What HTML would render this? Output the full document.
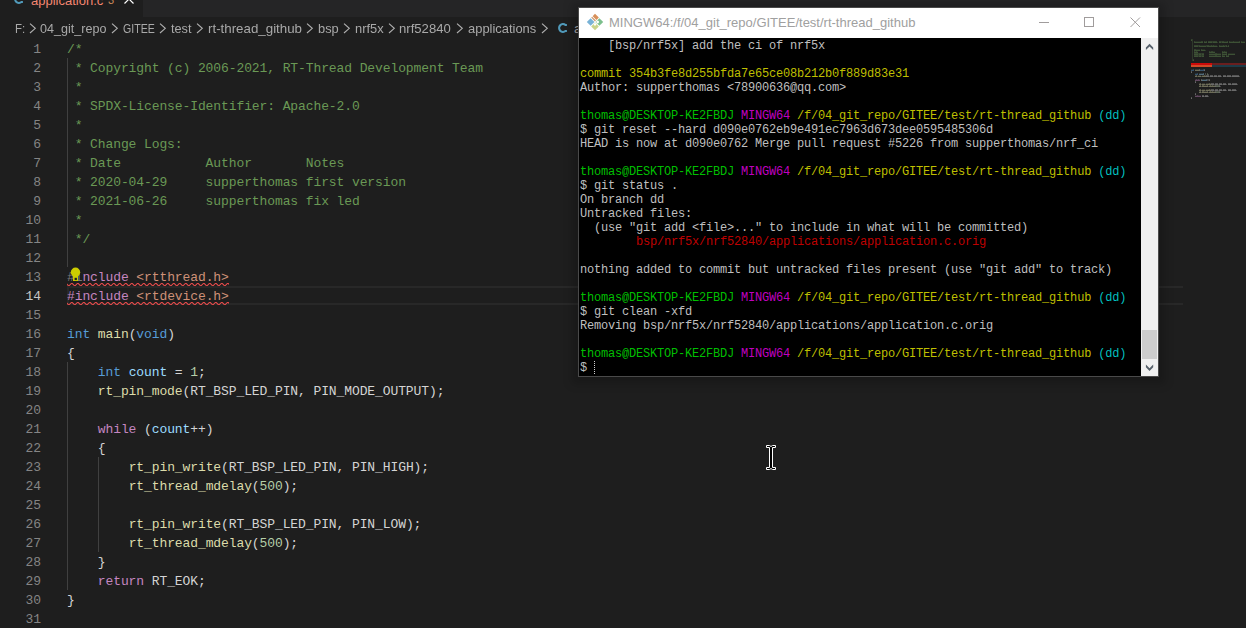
<!DOCTYPE html>
<html><head><meta charset="utf-8"><style>
*{margin:0;padding:0;box-sizing:border-box}
html,body{width:1246px;height:628px;overflow:hidden;background:#1e1e1e}
body{position:relative;font-family:"Liberation Sans",sans-serif}
.a{position:absolute}
.ln{position:absolute;left:0;width:41px;text-align:right;height:19px;line-height:19px;font-family:"Liberation Mono",monospace;font-size:13px;letter-spacing:-0.1px;color:#858585;white-space:pre}
.cl{position:absolute;left:67px;height:19px;line-height:19px;font-family:"Liberation Mono",monospace;font-size:13px;letter-spacing:-0.1px;white-space:pre}
.bc{position:absolute;top:18px;height:22px;line-height:22px;font-size:13px;color:#a9a9a9;white-space:pre}
.chev{position:absolute;top:22.6px;width:8px;height:11px}
.tl{position:absolute;left:580px;height:14px;line-height:14px;font-family:"Liberation Mono",monospace;font-size:12px;letter-spacing:-0.2px;white-space:pre}
</style></head><body>

<div class="a" style="left:0;top:0;width:1246px;height:17px;background:#252526"></div>
<div class="a" style="left:0;top:0;width:143px;height:17px;background:#1e1e1e"></div>
<svg class="a" style="left:11.3px;top:-9px" width="16" height="16"><path d="M11.9 5.0 L10.5 5.0 A3.9 3.9 0 1 0 10.5 11.0 L11.9 11.0" fill="none" stroke="#519aba" stroke-width="2.1"/></svg>
<div class="a" style="left:31px;top:-9.5px;height:20px;line-height:20px;font-size:13px;color:#f48771;white-space:pre">application.c</div>
<div class="a" style="left:108px;top:-10.5px;height:20px;line-height:20px;font-size:11px;color:#cc8b5a">3</div>
<svg class="a" style="left:124px;top:-6px" width="10" height="11"><path d="M0.5 0.5 L9.5 9.5 M9.5 0.5 L0.5 9.5" stroke="#ffffff" stroke-width="1.2"/></svg>
<div class="bc" style="left:14.52px;transform:scaleX(0.8800);transform-origin:0 0">F:</div>
<div class="bc" style="left:40.10px;transform:scaleX(0.9681);transform-origin:0 0">04_git_repo</div>
<div class="bc" style="left:123.20px;transform:scaleX(0.8154);transform-origin:0 0">GITEE</div>
<div class="bc" style="left:171.40px;transform:scaleX(0.9762);transform-origin:0 0">test</div>
<div class="bc" style="left:207.78px;transform:scaleX(1.0242);transform-origin:0 0">rt-thread_github</div>
<div class="bc" style="left:318.31px;transform:scaleX(0.9900);transform-origin:0 0">bsp</div>
<div class="bc" style="left:355.01px;transform:scaleX(0.9893);transform-origin:0 0">nrf5x</div>
<div class="bc" style="left:399.49px;transform:scaleX(1.0100);transform-origin:0 0">nrf52840</div>
<div class="bc" style="left:467.70px;transform:scaleX(0.9942);transform-origin:0 0">applications</div>
<svg class="chev" style="left:28.7px" width="8" height="11"><path d="M1 0.6 L6.3 5.3 L1 10" fill="none" stroke="#b0b0b0" stroke-width="1.1"/></svg>
<svg class="chev" style="left:110.8px" width="8" height="11"><path d="M1 0.6 L6.3 5.3 L1 10" fill="none" stroke="#b0b0b0" stroke-width="1.1"/></svg>
<svg class="chev" style="left:158.8px" width="8" height="11"><path d="M1 0.6 L6.3 5.3 L1 10" fill="none" stroke="#b0b0b0" stroke-width="1.1"/></svg>
<svg class="chev" style="left:196.1px" width="8" height="11"><path d="M1 0.6 L6.3 5.3 L1 10" fill="none" stroke="#b0b0b0" stroke-width="1.1"/></svg>
<svg class="chev" style="left:306.3px" width="8" height="11"><path d="M1 0.6 L6.3 5.3 L1 10" fill="none" stroke="#b0b0b0" stroke-width="1.1"/></svg>
<svg class="chev" style="left:343.3px" width="8" height="11"><path d="M1 0.6 L6.3 5.3 L1 10" fill="none" stroke="#b0b0b0" stroke-width="1.1"/></svg>
<svg class="chev" style="left:387.8px" width="8" height="11"><path d="M1 0.6 L6.3 5.3 L1 10" fill="none" stroke="#b0b0b0" stroke-width="1.1"/></svg>
<svg class="chev" style="left:455.7px" width="8" height="11"><path d="M1 0.6 L6.3 5.3 L1 10" fill="none" stroke="#b0b0b0" stroke-width="1.1"/></svg>
<svg class="chev" style="left:540.5px" width="8" height="11"><path d="M1 0.6 L6.3 5.3 L1 10" fill="none" stroke="#b0b0b0" stroke-width="1.1"/></svg>
<svg class="a" style="left:555px;top:20px" width="16" height="16"><path d="M11.9 5.0 L10.5 5.0 A3.9 3.9 0 1 0 10.5 11.0 L11.9 11.0" fill="none" stroke="#519aba" stroke-width="2.1"/></svg>
<div class="bc" style="left:574px">a</div>
<div class="a" style="left:67px;top:286px;width:1116px;height:19px;border:2px solid #282828;border-right:none"></div>
<div class="a" style="left:67px;top:58px;width:1px;height:209px;background:#404040"></div>
<div class="a" style="left:67px;top:362px;width:1px;height:228px;background:#404040"></div>
<div class="a" style="left:98px;top:457px;width:1px;height:95px;background:#404040"></div>
<div class="ln" style="top:40px;color:#858585">1</div>
<div class="cl" style="top:40px"><span style="color:#6a9955">/*</span></div>
<div class="ln" style="top:59px;color:#858585">2</div>
<div class="cl" style="top:59px"><span style="color:#6a9955"> * Copyright (c) 2006-2021, RT-Thread Development Team</span></div>
<div class="ln" style="top:78px;color:#858585">3</div>
<div class="cl" style="top:78px"><span style="color:#6a9955"> *</span></div>
<div class="ln" style="top:97px;color:#858585">4</div>
<div class="cl" style="top:97px"><span style="color:#6a9955"> * SPDX-License-Identifier: Apache-2.0</span></div>
<div class="ln" style="top:116px;color:#858585">5</div>
<div class="cl" style="top:116px"><span style="color:#6a9955"> *</span></div>
<div class="ln" style="top:135px;color:#858585">6</div>
<div class="cl" style="top:135px"><span style="color:#6a9955"> * Change Logs:</span></div>
<div class="ln" style="top:154px;color:#858585">7</div>
<div class="cl" style="top:154px"><span style="color:#6a9955"> * Date           Author       Notes</span></div>
<div class="ln" style="top:173px;color:#858585">8</div>
<div class="cl" style="top:173px"><span style="color:#6a9955"> * 2020-04-29     supperthomas first version</span></div>
<div class="ln" style="top:192px;color:#858585">9</div>
<div class="cl" style="top:192px"><span style="color:#6a9955"> * 2021-06-26     supperthomas fix led</span></div>
<div class="ln" style="top:211px;color:#858585">10</div>
<div class="cl" style="top:211px"><span style="color:#6a9955"> *</span></div>
<div class="ln" style="top:230px;color:#858585">11</div>
<div class="cl" style="top:230px"><span style="color:#6a9955"> */</span></div>
<div class="ln" style="top:249px;color:#858585">12</div>
<div class="ln" style="top:268px;color:#858585">13</div>
<div class="cl" style="top:268px"><span style="color:#7a7a7a">#i</span><span style="color:#c586c0">nclude</span><span style="color:#d4d4d4"> </span><span style="color:#ce9178">&lt;rtthread.h&gt;</span></div>
<div class="ln" style="top:287px;color:#c6c6c6">14</div>
<div class="cl" style="top:287px"><span style="color:#c586c0">#include</span><span style="color:#d4d4d4"> </span><span style="color:#ce9178">&lt;rtdevice.h&gt;</span></div>
<div class="ln" style="top:306px;color:#858585">15</div>
<div class="ln" style="top:325px;color:#858585">16</div>
<div class="cl" style="top:325px"><span style="color:#569cd6">int</span><span style="color:#d4d4d4"> </span><span style="color:#dcdcaa">main</span><span style="color:#d4d4d4">(</span><span style="color:#569cd6">void</span><span style="color:#d4d4d4">)</span></div>
<div class="ln" style="top:344px;color:#858585">17</div>
<div class="cl" style="top:344px"><span style="color:#d4d4d4">{</span></div>
<div class="ln" style="top:363px;color:#858585">18</div>
<div class="cl" style="top:363px"><span style="color:#d4d4d4">    </span><span style="color:#569cd6">int</span><span style="color:#d4d4d4"> </span><span style="color:#9cdcfe">count</span><span style="color:#d4d4d4"> = </span><span style="color:#b5cea8">1</span><span style="color:#d4d4d4">;</span></div>
<div class="ln" style="top:382px;color:#858585">19</div>
<div class="cl" style="top:382px"><span style="color:#d4d4d4">    </span><span style="color:#dcdcaa">rt_pin_mode</span><span style="color:#d4d4d4">(RT_BSP_LED_PIN, PIN_MODE_OUTPUT);</span></div>
<div class="ln" style="top:401px;color:#858585">20</div>
<div class="ln" style="top:420px;color:#858585">21</div>
<div class="cl" style="top:420px"><span style="color:#d4d4d4">    </span><span style="color:#c586c0">while</span><span style="color:#d4d4d4"> (</span><span style="color:#9cdcfe">count</span><span style="color:#d4d4d4">++)</span></div>
<div class="ln" style="top:439px;color:#858585">22</div>
<div class="cl" style="top:439px"><span style="color:#d4d4d4">    {</span></div>
<div class="ln" style="top:458px;color:#858585">23</div>
<div class="cl" style="top:458px"><span style="color:#d4d4d4">        </span><span style="color:#dcdcaa">rt_pin_write</span><span style="color:#d4d4d4">(RT_BSP_LED_PIN, PIN_HIGH);</span></div>
<div class="ln" style="top:477px;color:#858585">24</div>
<div class="cl" style="top:477px"><span style="color:#d4d4d4">        </span><span style="color:#dcdcaa">rt_thread_mdelay</span><span style="color:#d4d4d4">(</span><span style="color:#b5cea8">500</span><span style="color:#d4d4d4">);</span></div>
<div class="ln" style="top:496px;color:#858585">25</div>
<div class="ln" style="top:515px;color:#858585">26</div>
<div class="cl" style="top:515px"><span style="color:#d4d4d4">        </span><span style="color:#dcdcaa">rt_pin_write</span><span style="color:#d4d4d4">(RT_BSP_LED_PIN, PIN_LOW);</span></div>
<div class="ln" style="top:534px;color:#858585">27</div>
<div class="cl" style="top:534px"><span style="color:#d4d4d4">        </span><span style="color:#dcdcaa">rt_thread_mdelay</span><span style="color:#d4d4d4">(</span><span style="color:#b5cea8">500</span><span style="color:#d4d4d4">);</span></div>
<div class="ln" style="top:553px;color:#858585">28</div>
<div class="cl" style="top:553px"><span style="color:#d4d4d4">    }</span></div>
<div class="ln" style="top:572px;color:#858585">29</div>
<div class="cl" style="top:572px"><span style="color:#d4d4d4">    </span><span style="color:#c586c0">return</span><span style="color:#d4d4d4"> RT_EOK;</span></div>
<div class="ln" style="top:591px;color:#858585">30</div>
<div class="cl" style="top:591px"><span style="color:#d4d4d4">}</span></div>
<div class="ln" style="top:610px;color:#858585">31</div>
<svg class="a" style="left:0;top:0" width="1246" height="628"><defs><pattern id="sq" patternUnits="userSpaceOnUse" x="67" y="283" width="6" height="19"><g fill="#f14c4c"><polygon points="5.5,0 2.5,3 1.1,3 4.1,0"/><polygon points="4,0 6,2 6,0.6 5.4,0"/><polygon points="0,2 1,3 2.4,3 0,0.6"/></g></pattern></defs><rect x="67" y="283" width="162" height="3" fill="url(#sq)"/><rect x="67" y="302" width="162" height="3" fill="url(#sq)"/></svg>
<svg class="a" style="left:0;top:0" width="1246" height="628"><circle cx="75.5" cy="272.2" r="4.7" fill="#cccc00"/><rect x="73" y="274" width="5" height="7" fill="#cccc00"/><rect x="74.6" y="277.8" width="2.3" height="2.3" fill="#1e1e1e"/></svg>
<div class="a" style="left:572px;top:3px;width:593px;height:381px;background:rgba(0,0,0,0.18);filter:blur(4px)"></div>
<div class="a" style="left:578px;top:7px;width:581px;height:370px;background:#4a4a4a"></div>
<div class="a" style="left:579px;top:8px;width:579px;height:30px;background:#ffffff"></div>
<div class="a" style="left:579px;top:38px;width:562px;height:338px;background:#000000"></div>
<div class="a" style="left:1141px;top:38px;width:17px;height:338px;background:#f0f0f0"></div>
<div class="a" style="left:1142px;top:330px;width:15px;height:29px;background:#cdcdcd"></div>
<svg class="a" style="left:0;top:0" width="1246" height="628"><polygon points="1145.9,50 1145.9,47.4 1149.55,43.7 1153.2,47.4 1153.2,50 1149.55,46.4" fill="#56606a"/><polygon points="1145.9,364.6 1145.9,367.2 1149.55,370.9 1153.2,367.2 1153.2,364.6 1149.55,368.2" fill="#56606a"/></svg>
<svg class="a" style="left:586px;top:13px" width="18" height="18" viewBox="0 0 18 18"><g transform="rotate(45 9 9)"><rect x="3.2" y="3.2" width="5.4" height="3.3" fill="#d8905a"/><rect x="3.2" y="7.3" width="5.4" height="1.3" fill="#cc9a70"/><rect x="9.4" y="3.2" width="5.4" height="5.4" fill="#7cbf8c"/><rect x="9.4" y="9.4" width="5.4" height="5.4" fill="#c9d48a"/><rect x="3.2" y="9.4" width="5.4" height="5.4" fill="#78b2d6"/><circle cx="10.9" cy="7.1" r="1.3" fill="#fff"/><circle cx="10.7" cy="10.7" r="1.3" fill="#fff"/></g></svg>
<div class="a" style="left:609px;top:14.3px;height:18px;line-height:18px;font-size:13px;color:#a0a0a0;white-space:pre">MINGW64:/f/04_git_repo/GITEE/test/rt-thread_github</div>
<div class="a" style="left:1039px;top:22px;width:10px;height:1px;background:#a09c9c"></div>
<div class="a" style="left:1084px;top:17px;width:10px;height:10px;border:1px solid #a09c9c"></div>
<svg class="a" style="left:1130px;top:17px" width="11" height="11"><path d="M0.5 0.5 L10 10 M10 0.5 L0.5 10" fill="none" stroke="#a09c9c" stroke-width="1"/></svg>
<div class="tl" style="top:39px"><span style="color:#bfbfbf">    [bsp/nrf5x] add the ci of nrf5x</span></div>
<div class="tl" style="top:67px"><span style="color:#bfbf00">commit 354b3fe8d255bfda7e65ce08b212b0f889d83e31</span></div>
<div class="tl" style="top:81px"><span style="color:#bfbfbf">Author: supperthomas &lt;78900636@qq.com&gt;</span></div>
<div class="tl" style="top:109px"><span style="color:#00bf00">thomas@DESKTOP-KE2FBDJ</span><span style="color:#bfbfbf"> </span><span style="color:#bf00bf">MINGW64</span><span style="color:#bfbfbf"> </span><span style="color:#bfbf00">/f/04_git_repo/GITEE/test/rt-thread_github</span><span style="color:#bfbfbf"> </span><span style="color:#00bfbf">(dd)</span></div>
<div class="tl" style="top:123px"><span style="color:#bfbfbf">$ git reset --hard d090e0762eb9e491ec7963d673dee0595485306d</span></div>
<div class="tl" style="top:137px"><span style="color:#bfbfbf">HEAD is now at d090e0762 Merge pull request #5226 from supperthomas/nrf_ci</span></div>
<div class="tl" style="top:165px"><span style="color:#00bf00">thomas@DESKTOP-KE2FBDJ</span><span style="color:#bfbfbf"> </span><span style="color:#bf00bf">MINGW64</span><span style="color:#bfbfbf"> </span><span style="color:#bfbf00">/f/04_git_repo/GITEE/test/rt-thread_github</span><span style="color:#bfbfbf"> </span><span style="color:#00bfbf">(dd)</span></div>
<div class="tl" style="top:179px"><span style="color:#bfbfbf">$ git status .</span></div>
<div class="tl" style="top:193px"><span style="color:#bfbfbf">On branch dd</span></div>
<div class="tl" style="top:207px"><span style="color:#bfbfbf">Untracked files:</span></div>
<div class="tl" style="top:221px"><span style="color:#bfbfbf">  (use &quot;git add &lt;file&gt;...&quot; to include in what will be committed)</span></div>
<div class="tl" style="top:235px"><span style="color:#bf0000">        bsp/nrf5x/nrf52840/applications/application.c.orig</span></div>
<div class="tl" style="top:263px"><span style="color:#bfbfbf">nothing added to commit but untracked files present (use &quot;git add&quot; to track)</span></div>
<div class="tl" style="top:291px"><span style="color:#00bf00">thomas@DESKTOP-KE2FBDJ</span><span style="color:#bfbfbf"> </span><span style="color:#bf00bf">MINGW64</span><span style="color:#bfbfbf"> </span><span style="color:#bfbf00">/f/04_git_repo/GITEE/test/rt-thread_github</span><span style="color:#bfbfbf"> </span><span style="color:#00bfbf">(dd)</span></div>
<div class="tl" style="top:305px"><span style="color:#bfbfbf">$ git clean -xfd</span></div>
<div class="tl" style="top:319px"><span style="color:#bfbfbf">Removing bsp/nrf5x/nrf52840/applications/application.c.orig</span></div>
<div class="tl" style="top:347px"><span style="color:#00bf00">thomas@DESKTOP-KE2FBDJ</span><span style="color:#bfbfbf"> </span><span style="color:#bf00bf">MINGW64</span><span style="color:#bfbfbf"> </span><span style="color:#bfbf00">/f/04_git_repo/GITEE/test/rt-thread_github</span><span style="color:#bfbfbf"> </span><span style="color:#00bfbf">(dd)</span></div>
<div class="tl" style="top:361px"><span style="color:#bfbfbf">$ </span></div>
<div class="a" style="left:594px;top:361px;width:1px;height:13px;background:repeating-linear-gradient(#d0d0d0 0 1px,transparent 1px 2px)"></div>
<svg class="a" style="left:765px;top:444px" width="12" height="28"><path d="M1.5 1.5 H4.5 L6 2.5 L7.5 1.5 H10.5 V3.5 H7.5 V23.5 H10.5 V25.5 H7.5 L6 24.5 L4.5 25.5 H1.5 V23.5 H4.5 V3.5 H1.5 Z" fill="#000" stroke="#fff" stroke-width="1"/></svg>
<svg class="a" style="left:0;top:0" width="1246" height="628"><rect x="1191" y="63" width="21" height="2" fill="#cc0a0a"/><rect x="1212" y="63" width="34" height="2" fill="#6a1e1e"/><rect x="1191" y="65" width="21" height="2" fill="#d04a28"/><rect x="1212" y="65" width="34" height="2" fill="#1d3b48"/><rect x="1191" y="39" width="1" height="1" fill="#6a9955" fill-opacity="0.30"/><rect x="1191" y="40" width="1" height="1" fill="#6a9955" fill-opacity="0.42"/><rect x="1192" y="39" width="1" height="2" fill="#6a9955" fill-opacity="0.22"/><rect x="1192" y="41" width="1" height="2" fill="#6a9955" fill-opacity="0.22"/><rect x="1194" y="41" width="1" height="1" fill="#6a9955" fill-opacity="0.30"/><rect x="1194" y="42" width="1" height="1" fill="#6a9955" fill-opacity="0.42"/><rect x="1195" y="41" width="1" height="1" fill="#6a9955" fill-opacity="0.14"/><rect x="1195" y="42" width="1" height="1" fill="#6a9955" fill-opacity="0.42"/><rect x="1196" y="41" width="1" height="1" fill="#6a9955" fill-opacity="0.14"/><rect x="1196" y="42" width="1" height="1" fill="#6a9955" fill-opacity="0.42"/><rect x="1197" y="41" width="1" height="1" fill="#6a9955" fill-opacity="0.14"/><rect x="1197" y="42" width="1" height="1" fill="#6a9955" fill-opacity="0.42"/><rect x="1198" y="41" width="1" height="1" fill="#6a9955" fill-opacity="0.14"/><rect x="1198" y="42" width="1" height="1" fill="#6a9955" fill-opacity="0.42"/><rect x="1199" y="41" width="1" height="1" fill="#6a9955" fill-opacity="0.14"/><rect x="1199" y="42" width="1" height="1" fill="#6a9955" fill-opacity="0.42"/><rect x="1200" y="41" width="1" height="1" fill="#6a9955" fill-opacity="0.14"/><rect x="1200" y="42" width="1" height="1" fill="#6a9955" fill-opacity="0.42"/><rect x="1201" y="41" width="1" height="1" fill="#6a9955" fill-opacity="0.30"/><rect x="1201" y="42" width="1" height="1" fill="#6a9955" fill-opacity="0.42"/><rect x="1202" y="41" width="1" height="1" fill="#6a9955" fill-opacity="0.30"/><rect x="1202" y="42" width="1" height="1" fill="#6a9955" fill-opacity="0.42"/><rect x="1204" y="41" width="1" height="1" fill="#6a9955" fill-opacity="0.30"/><rect x="1204" y="42" width="1" height="1" fill="#6a9955" fill-opacity="0.42"/><rect x="1205" y="41" width="1" height="1" fill="#6a9955" fill-opacity="0.14"/><rect x="1205" y="42" width="1" height="1" fill="#6a9955" fill-opacity="0.42"/><rect x="1206" y="41" width="1" height="1" fill="#6a9955" fill-opacity="0.30"/><rect x="1206" y="42" width="1" height="1" fill="#6a9955" fill-opacity="0.42"/><rect x="1208" y="41" width="1" height="1" fill="#6a9955" fill-opacity="0.30"/><rect x="1208" y="42" width="1" height="1" fill="#6a9955" fill-opacity="0.42"/><rect x="1209" y="41" width="1" height="1" fill="#6a9955" fill-opacity="0.30"/><rect x="1209" y="42" width="1" height="1" fill="#6a9955" fill-opacity="0.42"/><rect x="1210" y="41" width="1" height="1" fill="#6a9955" fill-opacity="0.30"/><rect x="1210" y="42" width="1" height="1" fill="#6a9955" fill-opacity="0.42"/><rect x="1211" y="41" width="1" height="1" fill="#6a9955" fill-opacity="0.30"/><rect x="1211" y="42" width="1" height="1" fill="#6a9955" fill-opacity="0.42"/><rect x="1212" y="41" width="1" height="2" fill="#6a9955" fill-opacity="0.22"/><rect x="1213" y="41" width="1" height="1" fill="#6a9955" fill-opacity="0.30"/><rect x="1213" y="42" width="1" height="1" fill="#6a9955" fill-opacity="0.42"/><rect x="1214" y="41" width="1" height="1" fill="#6a9955" fill-opacity="0.30"/><rect x="1214" y="42" width="1" height="1" fill="#6a9955" fill-opacity="0.42"/><rect x="1215" y="41" width="1" height="1" fill="#6a9955" fill-opacity="0.30"/><rect x="1215" y="42" width="1" height="1" fill="#6a9955" fill-opacity="0.42"/><rect x="1216" y="41" width="1" height="1" fill="#6a9955" fill-opacity="0.30"/><rect x="1216" y="42" width="1" height="1" fill="#6a9955" fill-opacity="0.42"/><rect x="1217" y="42" width="1" height="1" fill="#6a9955" fill-opacity="0.22"/><rect x="1219" y="41" width="1" height="1" fill="#6a9955" fill-opacity="0.30"/><rect x="1219" y="42" width="1" height="1" fill="#6a9955" fill-opacity="0.42"/><rect x="1220" y="41" width="1" height="1" fill="#6a9955" fill-opacity="0.30"/><rect x="1220" y="42" width="1" height="1" fill="#6a9955" fill-opacity="0.42"/><rect x="1221" y="41" width="1" height="2" fill="#6a9955" fill-opacity="0.22"/><rect x="1222" y="41" width="1" height="1" fill="#6a9955" fill-opacity="0.30"/><rect x="1222" y="42" width="1" height="1" fill="#6a9955" fill-opacity="0.42"/><rect x="1223" y="41" width="1" height="1" fill="#6a9955" fill-opacity="0.30"/><rect x="1223" y="42" width="1" height="1" fill="#6a9955" fill-opacity="0.42"/><rect x="1224" y="41" width="1" height="1" fill="#6a9955" fill-opacity="0.14"/><rect x="1224" y="42" width="1" height="1" fill="#6a9955" fill-opacity="0.42"/><rect x="1225" y="41" width="1" height="1" fill="#6a9955" fill-opacity="0.14"/><rect x="1225" y="42" width="1" height="1" fill="#6a9955" fill-opacity="0.42"/><rect x="1226" y="41" width="1" height="1" fill="#6a9955" fill-opacity="0.14"/><rect x="1226" y="42" width="1" height="1" fill="#6a9955" fill-opacity="0.42"/><rect x="1227" y="41" width="1" height="1" fill="#6a9955" fill-opacity="0.30"/><rect x="1227" y="42" width="1" height="1" fill="#6a9955" fill-opacity="0.42"/><rect x="1229" y="41" width="1" height="1" fill="#6a9955" fill-opacity="0.30"/><rect x="1229" y="42" width="1" height="1" fill="#6a9955" fill-opacity="0.42"/><rect x="1230" y="41" width="1" height="1" fill="#6a9955" fill-opacity="0.14"/><rect x="1230" y="42" width="1" height="1" fill="#6a9955" fill-opacity="0.42"/><rect x="1231" y="41" width="1" height="1" fill="#6a9955" fill-opacity="0.14"/><rect x="1231" y="42" width="1" height="1" fill="#6a9955" fill-opacity="0.42"/><rect x="1232" y="41" width="1" height="1" fill="#6a9955" fill-opacity="0.14"/><rect x="1232" y="42" width="1" height="1" fill="#6a9955" fill-opacity="0.42"/><rect x="1233" y="41" width="1" height="1" fill="#6a9955" fill-opacity="0.30"/><rect x="1233" y="42" width="1" height="1" fill="#6a9955" fill-opacity="0.42"/><rect x="1234" y="41" width="1" height="1" fill="#6a9955" fill-opacity="0.14"/><rect x="1234" y="42" width="1" height="1" fill="#6a9955" fill-opacity="0.42"/><rect x="1235" y="41" width="1" height="1" fill="#6a9955" fill-opacity="0.14"/><rect x="1235" y="42" width="1" height="1" fill="#6a9955" fill-opacity="0.42"/><rect x="1236" y="41" width="1" height="1" fill="#6a9955" fill-opacity="0.14"/><rect x="1236" y="42" width="1" height="1" fill="#6a9955" fill-opacity="0.42"/><rect x="1237" y="41" width="1" height="1" fill="#6a9955" fill-opacity="0.14"/><rect x="1237" y="42" width="1" height="1" fill="#6a9955" fill-opacity="0.42"/><rect x="1238" y="41" width="1" height="1" fill="#6a9955" fill-opacity="0.14"/><rect x="1238" y="42" width="1" height="1" fill="#6a9955" fill-opacity="0.42"/><rect x="1239" y="41" width="1" height="1" fill="#6a9955" fill-opacity="0.30"/><rect x="1239" y="42" width="1" height="1" fill="#6a9955" fill-opacity="0.42"/><rect x="1241" y="41" width="1" height="1" fill="#6a9955" fill-opacity="0.30"/><rect x="1241" y="42" width="1" height="1" fill="#6a9955" fill-opacity="0.42"/><rect x="1242" y="41" width="1" height="1" fill="#6a9955" fill-opacity="0.14"/><rect x="1242" y="42" width="1" height="1" fill="#6a9955" fill-opacity="0.42"/><rect x="1243" y="41" width="1" height="1" fill="#6a9955" fill-opacity="0.14"/><rect x="1243" y="42" width="1" height="1" fill="#6a9955" fill-opacity="0.42"/><rect x="1244" y="41" width="1" height="1" fill="#6a9955" fill-opacity="0.14"/><rect x="1244" y="42" width="1" height="1" fill="#6a9955" fill-opacity="0.42"/><rect x="1192" y="43" width="1" height="2" fill="#6a9955" fill-opacity="0.22"/><rect x="1192" y="45" width="1" height="2" fill="#6a9955" fill-opacity="0.22"/><rect x="1194" y="45" width="1" height="1" fill="#6a9955" fill-opacity="0.30"/><rect x="1194" y="46" width="1" height="1" fill="#6a9955" fill-opacity="0.42"/><rect x="1195" y="45" width="1" height="1" fill="#6a9955" fill-opacity="0.30"/><rect x="1195" y="46" width="1" height="1" fill="#6a9955" fill-opacity="0.42"/><rect x="1196" y="45" width="1" height="1" fill="#6a9955" fill-opacity="0.30"/><rect x="1196" y="46" width="1" height="1" fill="#6a9955" fill-opacity="0.42"/><rect x="1197" y="45" width="1" height="1" fill="#6a9955" fill-opacity="0.30"/><rect x="1197" y="46" width="1" height="1" fill="#6a9955" fill-opacity="0.42"/><rect x="1198" y="45" width="1" height="2" fill="#6a9955" fill-opacity="0.22"/><rect x="1199" y="45" width="1" height="1" fill="#6a9955" fill-opacity="0.30"/><rect x="1199" y="46" width="1" height="1" fill="#6a9955" fill-opacity="0.42"/><rect x="1200" y="45" width="1" height="1" fill="#6a9955" fill-opacity="0.14"/><rect x="1200" y="46" width="1" height="1" fill="#6a9955" fill-opacity="0.42"/><rect x="1201" y="45" width="1" height="1" fill="#6a9955" fill-opacity="0.14"/><rect x="1201" y="46" width="1" height="1" fill="#6a9955" fill-opacity="0.42"/><rect x="1202" y="45" width="1" height="1" fill="#6a9955" fill-opacity="0.14"/><rect x="1202" y="46" width="1" height="1" fill="#6a9955" fill-opacity="0.42"/><rect x="1203" y="45" width="1" height="1" fill="#6a9955" fill-opacity="0.14"/><rect x="1203" y="46" width="1" height="1" fill="#6a9955" fill-opacity="0.42"/><rect x="1204" y="45" width="1" height="1" fill="#6a9955" fill-opacity="0.14"/><rect x="1204" y="46" width="1" height="1" fill="#6a9955" fill-opacity="0.42"/><rect x="1205" y="45" width="1" height="1" fill="#6a9955" fill-opacity="0.14"/><rect x="1205" y="46" width="1" height="1" fill="#6a9955" fill-opacity="0.42"/><rect x="1206" y="45" width="1" height="2" fill="#6a9955" fill-opacity="0.22"/><rect x="1207" y="45" width="1" height="1" fill="#6a9955" fill-opacity="0.30"/><rect x="1207" y="46" width="1" height="1" fill="#6a9955" fill-opacity="0.42"/><rect x="1208" y="45" width="1" height="1" fill="#6a9955" fill-opacity="0.30"/><rect x="1208" y="46" width="1" height="1" fill="#6a9955" fill-opacity="0.42"/><rect x="1209" y="45" width="1" height="1" fill="#6a9955" fill-opacity="0.14"/><rect x="1209" y="46" width="1" height="1" fill="#6a9955" fill-opacity="0.42"/><rect x="1210" y="45" width="1" height="1" fill="#6a9955" fill-opacity="0.14"/><rect x="1210" y="46" width="1" height="1" fill="#6a9955" fill-opacity="0.42"/><rect x="1211" y="45" width="1" height="1" fill="#6a9955" fill-opacity="0.30"/><rect x="1211" y="46" width="1" height="1" fill="#6a9955" fill-opacity="0.42"/><rect x="1212" y="45" width="1" height="1" fill="#6a9955" fill-opacity="0.14"/><rect x="1212" y="46" width="1" height="1" fill="#6a9955" fill-opacity="0.42"/><rect x="1213" y="45" width="1" height="1" fill="#6a9955" fill-opacity="0.30"/><rect x="1213" y="46" width="1" height="1" fill="#6a9955" fill-opacity="0.42"/><rect x="1214" y="45" width="1" height="1" fill="#6a9955" fill-opacity="0.14"/><rect x="1214" y="46" width="1" height="1" fill="#6a9955" fill-opacity="0.42"/><rect x="1215" y="45" width="1" height="1" fill="#6a9955" fill-opacity="0.14"/><rect x="1215" y="46" width="1" height="1" fill="#6a9955" fill-opacity="0.42"/><rect x="1216" y="45" width="1" height="1" fill="#6a9955" fill-opacity="0.14"/><rect x="1216" y="46" width="1" height="1" fill="#6a9955" fill-opacity="0.42"/><rect x="1217" y="46" width="1" height="1" fill="#6a9955" fill-opacity="0.22"/><rect x="1219" y="45" width="1" height="1" fill="#6a9955" fill-opacity="0.30"/><rect x="1219" y="46" width="1" height="1" fill="#6a9955" fill-opacity="0.42"/><rect x="1220" y="45" width="1" height="1" fill="#6a9955" fill-opacity="0.14"/><rect x="1220" y="46" width="1" height="1" fill="#6a9955" fill-opacity="0.42"/><rect x="1221" y="45" width="1" height="1" fill="#6a9955" fill-opacity="0.14"/><rect x="1221" y="46" width="1" height="1" fill="#6a9955" fill-opacity="0.42"/><rect x="1222" y="45" width="1" height="1" fill="#6a9955" fill-opacity="0.14"/><rect x="1222" y="46" width="1" height="1" fill="#6a9955" fill-opacity="0.42"/><rect x="1223" y="45" width="1" height="1" fill="#6a9955" fill-opacity="0.30"/><rect x="1223" y="46" width="1" height="1" fill="#6a9955" fill-opacity="0.42"/><rect x="1224" y="45" width="1" height="1" fill="#6a9955" fill-opacity="0.14"/><rect x="1224" y="46" width="1" height="1" fill="#6a9955" fill-opacity="0.42"/><rect x="1225" y="45" width="1" height="2" fill="#6a9955" fill-opacity="0.22"/><rect x="1226" y="45" width="1" height="1" fill="#6a9955" fill-opacity="0.30"/><rect x="1226" y="46" width="1" height="1" fill="#6a9955" fill-opacity="0.42"/><rect x="1227" y="46" width="1" height="1" fill="#6a9955" fill-opacity="0.22"/><rect x="1228" y="45" width="1" height="1" fill="#6a9955" fill-opacity="0.30"/><rect x="1228" y="46" width="1" height="1" fill="#6a9955" fill-opacity="0.42"/><rect x="1192" y="47" width="1" height="2" fill="#6a9955" fill-opacity="0.22"/><rect x="1192" y="49" width="1" height="2" fill="#6a9955" fill-opacity="0.22"/><rect x="1194" y="49" width="1" height="1" fill="#6a9955" fill-opacity="0.30"/><rect x="1194" y="50" width="1" height="1" fill="#6a9955" fill-opacity="0.42"/><rect x="1195" y="49" width="1" height="1" fill="#6a9955" fill-opacity="0.30"/><rect x="1195" y="50" width="1" height="1" fill="#6a9955" fill-opacity="0.42"/><rect x="1196" y="49" width="1" height="1" fill="#6a9955" fill-opacity="0.14"/><rect x="1196" y="50" width="1" height="1" fill="#6a9955" fill-opacity="0.42"/><rect x="1197" y="49" width="1" height="1" fill="#6a9955" fill-opacity="0.14"/><rect x="1197" y="50" width="1" height="1" fill="#6a9955" fill-opacity="0.42"/><rect x="1198" y="49" width="1" height="1" fill="#6a9955" fill-opacity="0.14"/><rect x="1198" y="50" width="1" height="1" fill="#6a9955" fill-opacity="0.42"/><rect x="1199" y="49" width="1" height="1" fill="#6a9955" fill-opacity="0.14"/><rect x="1199" y="50" width="1" height="1" fill="#6a9955" fill-opacity="0.42"/><rect x="1201" y="49" width="1" height="1" fill="#6a9955" fill-opacity="0.30"/><rect x="1201" y="50" width="1" height="1" fill="#6a9955" fill-opacity="0.42"/><rect x="1202" y="49" width="1" height="1" fill="#6a9955" fill-opacity="0.14"/><rect x="1202" y="50" width="1" height="1" fill="#6a9955" fill-opacity="0.42"/><rect x="1203" y="49" width="1" height="1" fill="#6a9955" fill-opacity="0.14"/><rect x="1203" y="50" width="1" height="1" fill="#6a9955" fill-opacity="0.42"/><rect x="1204" y="49" width="1" height="1" fill="#6a9955" fill-opacity="0.14"/><rect x="1204" y="50" width="1" height="1" fill="#6a9955" fill-opacity="0.42"/><rect x="1205" y="50" width="1" height="1" fill="#6a9955" fill-opacity="0.22"/><rect x="1192" y="51" width="1" height="2" fill="#6a9955" fill-opacity="0.22"/><rect x="1194" y="51" width="1" height="1" fill="#6a9955" fill-opacity="0.30"/><rect x="1194" y="52" width="1" height="1" fill="#6a9955" fill-opacity="0.42"/><rect x="1195" y="51" width="1" height="1" fill="#6a9955" fill-opacity="0.14"/><rect x="1195" y="52" width="1" height="1" fill="#6a9955" fill-opacity="0.42"/><rect x="1196" y="51" width="1" height="1" fill="#6a9955" fill-opacity="0.30"/><rect x="1196" y="52" width="1" height="1" fill="#6a9955" fill-opacity="0.42"/><rect x="1197" y="51" width="1" height="1" fill="#6a9955" fill-opacity="0.14"/><rect x="1197" y="52" width="1" height="1" fill="#6a9955" fill-opacity="0.42"/><rect x="1209" y="51" width="1" height="1" fill="#6a9955" fill-opacity="0.30"/><rect x="1209" y="52" width="1" height="1" fill="#6a9955" fill-opacity="0.42"/><rect x="1210" y="51" width="1" height="1" fill="#6a9955" fill-opacity="0.14"/><rect x="1210" y="52" width="1" height="1" fill="#6a9955" fill-opacity="0.42"/><rect x="1211" y="51" width="1" height="1" fill="#6a9955" fill-opacity="0.30"/><rect x="1211" y="52" width="1" height="1" fill="#6a9955" fill-opacity="0.42"/><rect x="1212" y="51" width="1" height="1" fill="#6a9955" fill-opacity="0.30"/><rect x="1212" y="52" width="1" height="1" fill="#6a9955" fill-opacity="0.42"/><rect x="1213" y="51" width="1" height="1" fill="#6a9955" fill-opacity="0.14"/><rect x="1213" y="52" width="1" height="1" fill="#6a9955" fill-opacity="0.42"/><rect x="1214" y="51" width="1" height="1" fill="#6a9955" fill-opacity="0.14"/><rect x="1214" y="52" width="1" height="1" fill="#6a9955" fill-opacity="0.42"/><rect x="1222" y="51" width="1" height="1" fill="#6a9955" fill-opacity="0.30"/><rect x="1222" y="52" width="1" height="1" fill="#6a9955" fill-opacity="0.42"/><rect x="1223" y="51" width="1" height="1" fill="#6a9955" fill-opacity="0.14"/><rect x="1223" y="52" width="1" height="1" fill="#6a9955" fill-opacity="0.42"/><rect x="1224" y="51" width="1" height="1" fill="#6a9955" fill-opacity="0.30"/><rect x="1224" y="52" width="1" height="1" fill="#6a9955" fill-opacity="0.42"/><rect x="1225" y="51" width="1" height="1" fill="#6a9955" fill-opacity="0.14"/><rect x="1225" y="52" width="1" height="1" fill="#6a9955" fill-opacity="0.42"/><rect x="1226" y="51" width="1" height="1" fill="#6a9955" fill-opacity="0.14"/><rect x="1226" y="52" width="1" height="1" fill="#6a9955" fill-opacity="0.42"/><rect x="1192" y="53" width="1" height="2" fill="#6a9955" fill-opacity="0.22"/><rect x="1194" y="53" width="1" height="1" fill="#6a9955" fill-opacity="0.30"/><rect x="1194" y="54" width="1" height="1" fill="#6a9955" fill-opacity="0.42"/><rect x="1195" y="53" width="1" height="1" fill="#6a9955" fill-opacity="0.30"/><rect x="1195" y="54" width="1" height="1" fill="#6a9955" fill-opacity="0.42"/><rect x="1196" y="53" width="1" height="1" fill="#6a9955" fill-opacity="0.30"/><rect x="1196" y="54" width="1" height="1" fill="#6a9955" fill-opacity="0.42"/><rect x="1197" y="53" width="1" height="1" fill="#6a9955" fill-opacity="0.30"/><rect x="1197" y="54" width="1" height="1" fill="#6a9955" fill-opacity="0.42"/><rect x="1198" y="53" width="1" height="2" fill="#6a9955" fill-opacity="0.22"/><rect x="1199" y="53" width="1" height="1" fill="#6a9955" fill-opacity="0.30"/><rect x="1199" y="54" width="1" height="1" fill="#6a9955" fill-opacity="0.42"/><rect x="1200" y="53" width="1" height="1" fill="#6a9955" fill-opacity="0.30"/><rect x="1200" y="54" width="1" height="1" fill="#6a9955" fill-opacity="0.42"/><rect x="1201" y="53" width="1" height="2" fill="#6a9955" fill-opacity="0.22"/><rect x="1202" y="53" width="1" height="1" fill="#6a9955" fill-opacity="0.30"/><rect x="1202" y="54" width="1" height="1" fill="#6a9955" fill-opacity="0.42"/><rect x="1203" y="53" width="1" height="1" fill="#6a9955" fill-opacity="0.30"/><rect x="1203" y="54" width="1" height="1" fill="#6a9955" fill-opacity="0.42"/><rect x="1209" y="53" width="1" height="1" fill="#6a9955" fill-opacity="0.14"/><rect x="1209" y="54" width="1" height="1" fill="#6a9955" fill-opacity="0.42"/><rect x="1210" y="53" width="1" height="1" fill="#6a9955" fill-opacity="0.14"/><rect x="1210" y="54" width="1" height="1" fill="#6a9955" fill-opacity="0.42"/><rect x="1211" y="53" width="1" height="1" fill="#6a9955" fill-opacity="0.14"/><rect x="1211" y="54" width="1" height="1" fill="#6a9955" fill-opacity="0.42"/><rect x="1212" y="53" width="1" height="1" fill="#6a9955" fill-opacity="0.14"/><rect x="1212" y="54" width="1" height="1" fill="#6a9955" fill-opacity="0.42"/><rect x="1213" y="53" width="1" height="1" fill="#6a9955" fill-opacity="0.14"/><rect x="1213" y="54" width="1" height="1" fill="#6a9955" fill-opacity="0.42"/><rect x="1214" y="53" width="1" height="1" fill="#6a9955" fill-opacity="0.14"/><rect x="1214" y="54" width="1" height="1" fill="#6a9955" fill-opacity="0.42"/><rect x="1215" y="53" width="1" height="1" fill="#6a9955" fill-opacity="0.30"/><rect x="1215" y="54" width="1" height="1" fill="#6a9955" fill-opacity="0.42"/><rect x="1216" y="53" width="1" height="1" fill="#6a9955" fill-opacity="0.30"/><rect x="1216" y="54" width="1" height="1" fill="#6a9955" fill-opacity="0.42"/><rect x="1217" y="53" width="1" height="1" fill="#6a9955" fill-opacity="0.14"/><rect x="1217" y="54" width="1" height="1" fill="#6a9955" fill-opacity="0.42"/><rect x="1218" y="53" width="1" height="1" fill="#6a9955" fill-opacity="0.14"/><rect x="1218" y="54" width="1" height="1" fill="#6a9955" fill-opacity="0.42"/><rect x="1219" y="53" width="1" height="1" fill="#6a9955" fill-opacity="0.14"/><rect x="1219" y="54" width="1" height="1" fill="#6a9955" fill-opacity="0.42"/><rect x="1220" y="53" width="1" height="1" fill="#6a9955" fill-opacity="0.14"/><rect x="1220" y="54" width="1" height="1" fill="#6a9955" fill-opacity="0.42"/><rect x="1222" y="53" width="1" height="1" fill="#6a9955" fill-opacity="0.30"/><rect x="1222" y="54" width="1" height="1" fill="#6a9955" fill-opacity="0.42"/><rect x="1223" y="53" width="1" height="1" fill="#6a9955" fill-opacity="0.14"/><rect x="1223" y="54" width="1" height="1" fill="#6a9955" fill-opacity="0.42"/><rect x="1224" y="53" width="1" height="1" fill="#6a9955" fill-opacity="0.14"/><rect x="1224" y="54" width="1" height="1" fill="#6a9955" fill-opacity="0.42"/><rect x="1225" y="53" width="1" height="1" fill="#6a9955" fill-opacity="0.14"/><rect x="1225" y="54" width="1" height="1" fill="#6a9955" fill-opacity="0.42"/><rect x="1226" y="53" width="1" height="1" fill="#6a9955" fill-opacity="0.30"/><rect x="1226" y="54" width="1" height="1" fill="#6a9955" fill-opacity="0.42"/><rect x="1228" y="53" width="1" height="1" fill="#6a9955" fill-opacity="0.14"/><rect x="1228" y="54" width="1" height="1" fill="#6a9955" fill-opacity="0.42"/><rect x="1229" y="53" width="1" height="1" fill="#6a9955" fill-opacity="0.14"/><rect x="1229" y="54" width="1" height="1" fill="#6a9955" fill-opacity="0.42"/><rect x="1230" y="53" width="1" height="1" fill="#6a9955" fill-opacity="0.14"/><rect x="1230" y="54" width="1" height="1" fill="#6a9955" fill-opacity="0.42"/><rect x="1231" y="53" width="1" height="1" fill="#6a9955" fill-opacity="0.14"/><rect x="1231" y="54" width="1" height="1" fill="#6a9955" fill-opacity="0.42"/><rect x="1232" y="53" width="1" height="1" fill="#6a9955" fill-opacity="0.14"/><rect x="1232" y="54" width="1" height="1" fill="#6a9955" fill-opacity="0.42"/><rect x="1233" y="53" width="1" height="1" fill="#6a9955" fill-opacity="0.14"/><rect x="1233" y="54" width="1" height="1" fill="#6a9955" fill-opacity="0.42"/><rect x="1234" y="53" width="1" height="1" fill="#6a9955" fill-opacity="0.14"/><rect x="1234" y="54" width="1" height="1" fill="#6a9955" fill-opacity="0.42"/><rect x="1192" y="55" width="1" height="2" fill="#6a9955" fill-opacity="0.22"/><rect x="1194" y="55" width="1" height="1" fill="#6a9955" fill-opacity="0.30"/><rect x="1194" y="56" width="1" height="1" fill="#6a9955" fill-opacity="0.42"/><rect x="1195" y="55" width="1" height="1" fill="#6a9955" fill-opacity="0.30"/><rect x="1195" y="56" width="1" height="1" fill="#6a9955" fill-opacity="0.42"/><rect x="1196" y="55" width="1" height="1" fill="#6a9955" fill-opacity="0.30"/><rect x="1196" y="56" width="1" height="1" fill="#6a9955" fill-opacity="0.42"/><rect x="1197" y="55" width="1" height="1" fill="#6a9955" fill-opacity="0.30"/><rect x="1197" y="56" width="1" height="1" fill="#6a9955" fill-opacity="0.42"/><rect x="1198" y="55" width="1" height="2" fill="#6a9955" fill-opacity="0.22"/><rect x="1199" y="55" width="1" height="1" fill="#6a9955" fill-opacity="0.30"/><rect x="1199" y="56" width="1" height="1" fill="#6a9955" fill-opacity="0.42"/><rect x="1200" y="55" width="1" height="1" fill="#6a9955" fill-opacity="0.30"/><rect x="1200" y="56" width="1" height="1" fill="#6a9955" fill-opacity="0.42"/><rect x="1201" y="55" width="1" height="2" fill="#6a9955" fill-opacity="0.22"/><rect x="1202" y="55" width="1" height="1" fill="#6a9955" fill-opacity="0.30"/><rect x="1202" y="56" width="1" height="1" fill="#6a9955" fill-opacity="0.42"/><rect x="1203" y="55" width="1" height="1" fill="#6a9955" fill-opacity="0.30"/><rect x="1203" y="56" width="1" height="1" fill="#6a9955" fill-opacity="0.42"/><rect x="1209" y="55" width="1" height="1" fill="#6a9955" fill-opacity="0.14"/><rect x="1209" y="56" width="1" height="1" fill="#6a9955" fill-opacity="0.42"/><rect x="1210" y="55" width="1" height="1" fill="#6a9955" fill-opacity="0.14"/><rect x="1210" y="56" width="1" height="1" fill="#6a9955" fill-opacity="0.42"/><rect x="1211" y="55" width="1" height="1" fill="#6a9955" fill-opacity="0.14"/><rect x="1211" y="56" width="1" height="1" fill="#6a9955" fill-opacity="0.42"/><rect x="1212" y="55" width="1" height="1" fill="#6a9955" fill-opacity="0.14"/><rect x="1212" y="56" width="1" height="1" fill="#6a9955" fill-opacity="0.42"/><rect x="1213" y="55" width="1" height="1" fill="#6a9955" fill-opacity="0.14"/><rect x="1213" y="56" width="1" height="1" fill="#6a9955" fill-opacity="0.42"/><rect x="1214" y="55" width="1" height="1" fill="#6a9955" fill-opacity="0.14"/><rect x="1214" y="56" width="1" height="1" fill="#6a9955" fill-opacity="0.42"/><rect x="1215" y="55" width="1" height="1" fill="#6a9955" fill-opacity="0.30"/><rect x="1215" y="56" width="1" height="1" fill="#6a9955" fill-opacity="0.42"/><rect x="1216" y="55" width="1" height="1" fill="#6a9955" fill-opacity="0.30"/><rect x="1216" y="56" width="1" height="1" fill="#6a9955" fill-opacity="0.42"/><rect x="1217" y="55" width="1" height="1" fill="#6a9955" fill-opacity="0.14"/><rect x="1217" y="56" width="1" height="1" fill="#6a9955" fill-opacity="0.42"/><rect x="1218" y="55" width="1" height="1" fill="#6a9955" fill-opacity="0.14"/><rect x="1218" y="56" width="1" height="1" fill="#6a9955" fill-opacity="0.42"/><rect x="1219" y="55" width="1" height="1" fill="#6a9955" fill-opacity="0.14"/><rect x="1219" y="56" width="1" height="1" fill="#6a9955" fill-opacity="0.42"/><rect x="1220" y="55" width="1" height="1" fill="#6a9955" fill-opacity="0.14"/><rect x="1220" y="56" width="1" height="1" fill="#6a9955" fill-opacity="0.42"/><rect x="1222" y="55" width="1" height="1" fill="#6a9955" fill-opacity="0.30"/><rect x="1222" y="56" width="1" height="1" fill="#6a9955" fill-opacity="0.42"/><rect x="1223" y="55" width="1" height="1" fill="#6a9955" fill-opacity="0.14"/><rect x="1223" y="56" width="1" height="1" fill="#6a9955" fill-opacity="0.42"/><rect x="1224" y="55" width="1" height="1" fill="#6a9955" fill-opacity="0.14"/><rect x="1224" y="56" width="1" height="1" fill="#6a9955" fill-opacity="0.42"/><rect x="1226" y="55" width="1" height="1" fill="#6a9955" fill-opacity="0.30"/><rect x="1226" y="56" width="1" height="1" fill="#6a9955" fill-opacity="0.42"/><rect x="1227" y="55" width="1" height="1" fill="#6a9955" fill-opacity="0.14"/><rect x="1227" y="56" width="1" height="1" fill="#6a9955" fill-opacity="0.42"/><rect x="1228" y="55" width="1" height="1" fill="#6a9955" fill-opacity="0.30"/><rect x="1228" y="56" width="1" height="1" fill="#6a9955" fill-opacity="0.42"/><rect x="1192" y="57" width="1" height="2" fill="#6a9955" fill-opacity="0.22"/><rect x="1192" y="59" width="1" height="2" fill="#6a9955" fill-opacity="0.22"/><rect x="1193" y="59" width="1" height="1" fill="#6a9955" fill-opacity="0.30"/><rect x="1193" y="60" width="1" height="1" fill="#6a9955" fill-opacity="0.42"/><rect x="1191" y="69" width="1" height="1" fill="#569cd6" fill-opacity="0.14"/><rect x="1191" y="70" width="1" height="1" fill="#569cd6" fill-opacity="0.42"/><rect x="1192" y="69" width="1" height="1" fill="#569cd6" fill-opacity="0.14"/><rect x="1192" y="70" width="1" height="1" fill="#569cd6" fill-opacity="0.42"/><rect x="1193" y="69" width="1" height="1" fill="#569cd6" fill-opacity="0.30"/><rect x="1193" y="70" width="1" height="1" fill="#569cd6" fill-opacity="0.42"/><rect x="1195" y="69" width="1" height="1" fill="#dcdcaa" fill-opacity="0.14"/><rect x="1195" y="70" width="1" height="1" fill="#dcdcaa" fill-opacity="0.42"/><rect x="1196" y="69" width="1" height="1" fill="#dcdcaa" fill-opacity="0.14"/><rect x="1196" y="70" width="1" height="1" fill="#dcdcaa" fill-opacity="0.42"/><rect x="1197" y="69" width="1" height="1" fill="#dcdcaa" fill-opacity="0.14"/><rect x="1197" y="70" width="1" height="1" fill="#dcdcaa" fill-opacity="0.42"/><rect x="1198" y="69" width="1" height="1" fill="#dcdcaa" fill-opacity="0.14"/><rect x="1198" y="70" width="1" height="1" fill="#dcdcaa" fill-opacity="0.42"/><rect x="1199" y="69" width="1" height="1" fill="#d4d4d4" fill-opacity="0.30"/><rect x="1199" y="70" width="1" height="1" fill="#d4d4d4" fill-opacity="0.42"/><rect x="1200" y="69" width="1" height="1" fill="#569cd6" fill-opacity="0.14"/><rect x="1200" y="70" width="1" height="1" fill="#569cd6" fill-opacity="0.42"/><rect x="1201" y="69" width="1" height="1" fill="#569cd6" fill-opacity="0.14"/><rect x="1201" y="70" width="1" height="1" fill="#569cd6" fill-opacity="0.42"/><rect x="1202" y="69" width="1" height="1" fill="#569cd6" fill-opacity="0.14"/><rect x="1202" y="70" width="1" height="1" fill="#569cd6" fill-opacity="0.42"/><rect x="1203" y="69" width="1" height="1" fill="#569cd6" fill-opacity="0.30"/><rect x="1203" y="70" width="1" height="1" fill="#569cd6" fill-opacity="0.42"/><rect x="1204" y="69" width="1" height="1" fill="#d4d4d4" fill-opacity="0.30"/><rect x="1204" y="70" width="1" height="1" fill="#d4d4d4" fill-opacity="0.42"/><rect x="1191" y="71" width="1" height="1" fill="#d4d4d4" fill-opacity="0.30"/><rect x="1191" y="72" width="1" height="1" fill="#d4d4d4" fill-opacity="0.42"/><rect x="1195" y="73" width="1" height="1" fill="#569cd6" fill-opacity="0.14"/><rect x="1195" y="74" width="1" height="1" fill="#569cd6" fill-opacity="0.42"/><rect x="1196" y="73" width="1" height="1" fill="#569cd6" fill-opacity="0.14"/><rect x="1196" y="74" width="1" height="1" fill="#569cd6" fill-opacity="0.42"/><rect x="1197" y="73" width="1" height="1" fill="#569cd6" fill-opacity="0.30"/><rect x="1197" y="74" width="1" height="1" fill="#569cd6" fill-opacity="0.42"/><rect x="1199" y="73" width="1" height="1" fill="#9cdcfe" fill-opacity="0.14"/><rect x="1199" y="74" width="1" height="1" fill="#9cdcfe" fill-opacity="0.42"/><rect x="1200" y="73" width="1" height="1" fill="#9cdcfe" fill-opacity="0.14"/><rect x="1200" y="74" width="1" height="1" fill="#9cdcfe" fill-opacity="0.42"/><rect x="1201" y="73" width="1" height="1" fill="#9cdcfe" fill-opacity="0.14"/><rect x="1201" y="74" width="1" height="1" fill="#9cdcfe" fill-opacity="0.42"/><rect x="1202" y="73" width="1" height="1" fill="#9cdcfe" fill-opacity="0.14"/><rect x="1202" y="74" width="1" height="1" fill="#9cdcfe" fill-opacity="0.42"/><rect x="1203" y="73" width="1" height="1" fill="#9cdcfe" fill-opacity="0.30"/><rect x="1203" y="74" width="1" height="1" fill="#9cdcfe" fill-opacity="0.42"/><rect x="1205" y="73" width="1" height="2" fill="#d4d4d4" fill-opacity="0.22"/><rect x="1207" y="73" width="1" height="1" fill="#b5cea8" fill-opacity="0.30"/><rect x="1207" y="74" width="1" height="1" fill="#b5cea8" fill-opacity="0.42"/><rect x="1208" y="74" width="1" height="1" fill="#d4d4d4" fill-opacity="0.22"/><rect x="1195" y="75" width="1" height="1" fill="#dcdcaa" fill-opacity="0.14"/><rect x="1195" y="76" width="1" height="1" fill="#dcdcaa" fill-opacity="0.42"/><rect x="1196" y="75" width="1" height="1" fill="#dcdcaa" fill-opacity="0.30"/><rect x="1196" y="76" width="1" height="1" fill="#dcdcaa" fill-opacity="0.42"/><rect x="1197" y="76" width="1" height="1" fill="#dcdcaa" fill-opacity="0.22"/><rect x="1198" y="75" width="1" height="1" fill="#dcdcaa" fill-opacity="0.14"/><rect x="1198" y="76" width="1" height="1" fill="#dcdcaa" fill-opacity="0.42"/><rect x="1199" y="75" width="1" height="1" fill="#dcdcaa" fill-opacity="0.14"/><rect x="1199" y="76" width="1" height="1" fill="#dcdcaa" fill-opacity="0.42"/><rect x="1200" y="75" width="1" height="1" fill="#dcdcaa" fill-opacity="0.14"/><rect x="1200" y="76" width="1" height="1" fill="#dcdcaa" fill-opacity="0.42"/><rect x="1201" y="76" width="1" height="1" fill="#dcdcaa" fill-opacity="0.22"/><rect x="1202" y="75" width="1" height="1" fill="#dcdcaa" fill-opacity="0.14"/><rect x="1202" y="76" width="1" height="1" fill="#dcdcaa" fill-opacity="0.42"/><rect x="1203" y="75" width="1" height="1" fill="#dcdcaa" fill-opacity="0.14"/><rect x="1203" y="76" width="1" height="1" fill="#dcdcaa" fill-opacity="0.42"/><rect x="1204" y="75" width="1" height="1" fill="#dcdcaa" fill-opacity="0.30"/><rect x="1204" y="76" width="1" height="1" fill="#dcdcaa" fill-opacity="0.42"/><rect x="1205" y="75" width="1" height="1" fill="#dcdcaa" fill-opacity="0.14"/><rect x="1205" y="76" width="1" height="1" fill="#dcdcaa" fill-opacity="0.42"/><rect x="1206" y="75" width="1" height="1" fill="#d4d4d4" fill-opacity="0.30"/><rect x="1206" y="76" width="1" height="1" fill="#d4d4d4" fill-opacity="0.42"/><rect x="1207" y="75" width="1" height="1" fill="#d4d4d4" fill-opacity="0.30"/><rect x="1207" y="76" width="1" height="1" fill="#d4d4d4" fill-opacity="0.42"/><rect x="1208" y="75" width="1" height="1" fill="#d4d4d4" fill-opacity="0.30"/><rect x="1208" y="76" width="1" height="1" fill="#d4d4d4" fill-opacity="0.42"/><rect x="1209" y="76" width="1" height="1" fill="#d4d4d4" fill-opacity="0.22"/><rect x="1210" y="75" width="1" height="1" fill="#d4d4d4" fill-opacity="0.30"/><rect x="1210" y="76" width="1" height="1" fill="#d4d4d4" fill-opacity="0.42"/><rect x="1211" y="75" width="1" height="1" fill="#d4d4d4" fill-opacity="0.30"/><rect x="1211" y="76" width="1" height="1" fill="#d4d4d4" fill-opacity="0.42"/><rect x="1212" y="75" width="1" height="1" fill="#d4d4d4" fill-opacity="0.30"/><rect x="1212" y="76" width="1" height="1" fill="#d4d4d4" fill-opacity="0.42"/><rect x="1213" y="76" width="1" height="1" fill="#d4d4d4" fill-opacity="0.22"/><rect x="1214" y="75" width="1" height="1" fill="#d4d4d4" fill-opacity="0.30"/><rect x="1214" y="76" width="1" height="1" fill="#d4d4d4" fill-opacity="0.42"/><rect x="1215" y="75" width="1" height="1" fill="#d4d4d4" fill-opacity="0.30"/><rect x="1215" y="76" width="1" height="1" fill="#d4d4d4" fill-opacity="0.42"/><rect x="1216" y="75" width="1" height="1" fill="#d4d4d4" fill-opacity="0.30"/><rect x="1216" y="76" width="1" height="1" fill="#d4d4d4" fill-opacity="0.42"/><rect x="1217" y="76" width="1" height="1" fill="#d4d4d4" fill-opacity="0.22"/><rect x="1218" y="75" width="1" height="1" fill="#d4d4d4" fill-opacity="0.30"/><rect x="1218" y="76" width="1" height="1" fill="#d4d4d4" fill-opacity="0.42"/><rect x="1219" y="75" width="1" height="1" fill="#d4d4d4" fill-opacity="0.30"/><rect x="1219" y="76" width="1" height="1" fill="#d4d4d4" fill-opacity="0.42"/><rect x="1220" y="75" width="1" height="1" fill="#d4d4d4" fill-opacity="0.30"/><rect x="1220" y="76" width="1" height="1" fill="#d4d4d4" fill-opacity="0.42"/><rect x="1221" y="76" width="1" height="1" fill="#d4d4d4" fill-opacity="0.22"/><rect x="1223" y="75" width="1" height="1" fill="#d4d4d4" fill-opacity="0.30"/><rect x="1223" y="76" width="1" height="1" fill="#d4d4d4" fill-opacity="0.42"/><rect x="1224" y="75" width="1" height="1" fill="#d4d4d4" fill-opacity="0.30"/><rect x="1224" y="76" width="1" height="1" fill="#d4d4d4" fill-opacity="0.42"/><rect x="1225" y="75" width="1" height="1" fill="#d4d4d4" fill-opacity="0.30"/><rect x="1225" y="76" width="1" height="1" fill="#d4d4d4" fill-opacity="0.42"/><rect x="1226" y="76" width="1" height="1" fill="#d4d4d4" fill-opacity="0.22"/><rect x="1227" y="75" width="1" height="1" fill="#d4d4d4" fill-opacity="0.30"/><rect x="1227" y="76" width="1" height="1" fill="#d4d4d4" fill-opacity="0.42"/><rect x="1228" y="75" width="1" height="1" fill="#d4d4d4" fill-opacity="0.30"/><rect x="1228" y="76" width="1" height="1" fill="#d4d4d4" fill-opacity="0.42"/><rect x="1229" y="75" width="1" height="1" fill="#d4d4d4" fill-opacity="0.30"/><rect x="1229" y="76" width="1" height="1" fill="#d4d4d4" fill-opacity="0.42"/><rect x="1230" y="75" width="1" height="1" fill="#d4d4d4" fill-opacity="0.30"/><rect x="1230" y="76" width="1" height="1" fill="#d4d4d4" fill-opacity="0.42"/><rect x="1231" y="76" width="1" height="1" fill="#d4d4d4" fill-opacity="0.22"/><rect x="1232" y="75" width="1" height="1" fill="#d4d4d4" fill-opacity="0.30"/><rect x="1232" y="76" width="1" height="1" fill="#d4d4d4" fill-opacity="0.42"/><rect x="1233" y="75" width="1" height="1" fill="#d4d4d4" fill-opacity="0.30"/><rect x="1233" y="76" width="1" height="1" fill="#d4d4d4" fill-opacity="0.42"/><rect x="1234" y="75" width="1" height="1" fill="#d4d4d4" fill-opacity="0.30"/><rect x="1234" y="76" width="1" height="1" fill="#d4d4d4" fill-opacity="0.42"/><rect x="1235" y="75" width="1" height="1" fill="#d4d4d4" fill-opacity="0.30"/><rect x="1235" y="76" width="1" height="1" fill="#d4d4d4" fill-opacity="0.42"/><rect x="1236" y="75" width="1" height="1" fill="#d4d4d4" fill-opacity="0.30"/><rect x="1236" y="76" width="1" height="1" fill="#d4d4d4" fill-opacity="0.42"/><rect x="1237" y="75" width="1" height="1" fill="#d4d4d4" fill-opacity="0.30"/><rect x="1237" y="76" width="1" height="1" fill="#d4d4d4" fill-opacity="0.42"/><rect x="1238" y="75" width="1" height="1" fill="#d4d4d4" fill-opacity="0.30"/><rect x="1238" y="76" width="1" height="1" fill="#d4d4d4" fill-opacity="0.42"/><rect x="1239" y="76" width="1" height="1" fill="#d4d4d4" fill-opacity="0.22"/><rect x="1195" y="79" width="1" height="1" fill="#c586c0" fill-opacity="0.14"/><rect x="1195" y="80" width="1" height="1" fill="#c586c0" fill-opacity="0.42"/><rect x="1196" y="79" width="1" height="1" fill="#c586c0" fill-opacity="0.30"/><rect x="1196" y="80" width="1" height="1" fill="#c586c0" fill-opacity="0.42"/><rect x="1197" y="79" width="1" height="1" fill="#c586c0" fill-opacity="0.14"/><rect x="1197" y="80" width="1" height="1" fill="#c586c0" fill-opacity="0.42"/><rect x="1198" y="79" width="1" height="1" fill="#c586c0" fill-opacity="0.30"/><rect x="1198" y="80" width="1" height="1" fill="#c586c0" fill-opacity="0.42"/><rect x="1199" y="79" width="1" height="1" fill="#c586c0" fill-opacity="0.14"/><rect x="1199" y="80" width="1" height="1" fill="#c586c0" fill-opacity="0.42"/><rect x="1201" y="79" width="1" height="1" fill="#d4d4d4" fill-opacity="0.30"/><rect x="1201" y="80" width="1" height="1" fill="#d4d4d4" fill-opacity="0.42"/><rect x="1202" y="79" width="1" height="1" fill="#9cdcfe" fill-opacity="0.14"/><rect x="1202" y="80" width="1" height="1" fill="#9cdcfe" fill-opacity="0.42"/><rect x="1203" y="79" width="1" height="1" fill="#9cdcfe" fill-opacity="0.14"/><rect x="1203" y="80" width="1" height="1" fill="#9cdcfe" fill-opacity="0.42"/><rect x="1204" y="79" width="1" height="1" fill="#9cdcfe" fill-opacity="0.14"/><rect x="1204" y="80" width="1" height="1" fill="#9cdcfe" fill-opacity="0.42"/><rect x="1205" y="79" width="1" height="1" fill="#9cdcfe" fill-opacity="0.14"/><rect x="1205" y="80" width="1" height="1" fill="#9cdcfe" fill-opacity="0.42"/><rect x="1206" y="79" width="1" height="1" fill="#9cdcfe" fill-opacity="0.30"/><rect x="1206" y="80" width="1" height="1" fill="#9cdcfe" fill-opacity="0.42"/><rect x="1207" y="79" width="1" height="2" fill="#d4d4d4" fill-opacity="0.22"/><rect x="1208" y="79" width="1" height="2" fill="#d4d4d4" fill-opacity="0.22"/><rect x="1209" y="79" width="1" height="1" fill="#d4d4d4" fill-opacity="0.30"/><rect x="1209" y="80" width="1" height="1" fill="#d4d4d4" fill-opacity="0.42"/><rect x="1195" y="81" width="1" height="1" fill="#d4d4d4" fill-opacity="0.30"/><rect x="1195" y="82" width="1" height="1" fill="#d4d4d4" fill-opacity="0.42"/><rect x="1199" y="83" width="1" height="1" fill="#dcdcaa" fill-opacity="0.14"/><rect x="1199" y="84" width="1" height="1" fill="#dcdcaa" fill-opacity="0.42"/><rect x="1200" y="83" width="1" height="1" fill="#dcdcaa" fill-opacity="0.30"/><rect x="1200" y="84" width="1" height="1" fill="#dcdcaa" fill-opacity="0.42"/><rect x="1201" y="84" width="1" height="1" fill="#dcdcaa" fill-opacity="0.22"/><rect x="1202" y="83" width="1" height="1" fill="#dcdcaa" fill-opacity="0.14"/><rect x="1202" y="84" width="1" height="1" fill="#dcdcaa" fill-opacity="0.42"/><rect x="1203" y="83" width="1" height="1" fill="#dcdcaa" fill-opacity="0.14"/><rect x="1203" y="84" width="1" height="1" fill="#dcdcaa" fill-opacity="0.42"/><rect x="1204" y="83" width="1" height="1" fill="#dcdcaa" fill-opacity="0.14"/><rect x="1204" y="84" width="1" height="1" fill="#dcdcaa" fill-opacity="0.42"/><rect x="1205" y="84" width="1" height="1" fill="#dcdcaa" fill-opacity="0.22"/><rect x="1206" y="83" width="1" height="1" fill="#dcdcaa" fill-opacity="0.14"/><rect x="1206" y="84" width="1" height="1" fill="#dcdcaa" fill-opacity="0.42"/><rect x="1207" y="83" width="1" height="1" fill="#dcdcaa" fill-opacity="0.14"/><rect x="1207" y="84" width="1" height="1" fill="#dcdcaa" fill-opacity="0.42"/><rect x="1208" y="83" width="1" height="1" fill="#dcdcaa" fill-opacity="0.14"/><rect x="1208" y="84" width="1" height="1" fill="#dcdcaa" fill-opacity="0.42"/><rect x="1209" y="83" width="1" height="1" fill="#dcdcaa" fill-opacity="0.30"/><rect x="1209" y="84" width="1" height="1" fill="#dcdcaa" fill-opacity="0.42"/><rect x="1210" y="83" width="1" height="1" fill="#dcdcaa" fill-opacity="0.14"/><rect x="1210" y="84" width="1" height="1" fill="#dcdcaa" fill-opacity="0.42"/><rect x="1211" y="83" width="1" height="1" fill="#d4d4d4" fill-opacity="0.30"/><rect x="1211" y="84" width="1" height="1" fill="#d4d4d4" fill-opacity="0.42"/><rect x="1212" y="83" width="1" height="1" fill="#d4d4d4" fill-opacity="0.30"/><rect x="1212" y="84" width="1" height="1" fill="#d4d4d4" fill-opacity="0.42"/><rect x="1213" y="83" width="1" height="1" fill="#d4d4d4" fill-opacity="0.30"/><rect x="1213" y="84" width="1" height="1" fill="#d4d4d4" fill-opacity="0.42"/><rect x="1214" y="84" width="1" height="1" fill="#d4d4d4" fill-opacity="0.22"/><rect x="1215" y="83" width="1" height="1" fill="#d4d4d4" fill-opacity="0.30"/><rect x="1215" y="84" width="1" height="1" fill="#d4d4d4" fill-opacity="0.42"/><rect x="1216" y="83" width="1" height="1" fill="#d4d4d4" fill-opacity="0.30"/><rect x="1216" y="84" width="1" height="1" fill="#d4d4d4" fill-opacity="0.42"/><rect x="1217" y="83" width="1" height="1" fill="#d4d4d4" fill-opacity="0.30"/><rect x="1217" y="84" width="1" height="1" fill="#d4d4d4" fill-opacity="0.42"/><rect x="1218" y="84" width="1" height="1" fill="#d4d4d4" fill-opacity="0.22"/><rect x="1219" y="83" width="1" height="1" fill="#d4d4d4" fill-opacity="0.30"/><rect x="1219" y="84" width="1" height="1" fill="#d4d4d4" fill-opacity="0.42"/><rect x="1220" y="83" width="1" height="1" fill="#d4d4d4" fill-opacity="0.30"/><rect x="1220" y="84" width="1" height="1" fill="#d4d4d4" fill-opacity="0.42"/><rect x="1221" y="83" width="1" height="1" fill="#d4d4d4" fill-opacity="0.30"/><rect x="1221" y="84" width="1" height="1" fill="#d4d4d4" fill-opacity="0.42"/><rect x="1222" y="84" width="1" height="1" fill="#d4d4d4" fill-opacity="0.22"/><rect x="1223" y="83" width="1" height="1" fill="#d4d4d4" fill-opacity="0.30"/><rect x="1223" y="84" width="1" height="1" fill="#d4d4d4" fill-opacity="0.42"/><rect x="1224" y="83" width="1" height="1" fill="#d4d4d4" fill-opacity="0.30"/><rect x="1224" y="84" width="1" height="1" fill="#d4d4d4" fill-opacity="0.42"/><rect x="1225" y="83" width="1" height="1" fill="#d4d4d4" fill-opacity="0.30"/><rect x="1225" y="84" width="1" height="1" fill="#d4d4d4" fill-opacity="0.42"/><rect x="1226" y="84" width="1" height="1" fill="#d4d4d4" fill-opacity="0.22"/><rect x="1228" y="83" width="1" height="1" fill="#d4d4d4" fill-opacity="0.30"/><rect x="1228" y="84" width="1" height="1" fill="#d4d4d4" fill-opacity="0.42"/><rect x="1229" y="83" width="1" height="1" fill="#d4d4d4" fill-opacity="0.30"/><rect x="1229" y="84" width="1" height="1" fill="#d4d4d4" fill-opacity="0.42"/><rect x="1230" y="83" width="1" height="1" fill="#d4d4d4" fill-opacity="0.30"/><rect x="1230" y="84" width="1" height="1" fill="#d4d4d4" fill-opacity="0.42"/><rect x="1231" y="84" width="1" height="1" fill="#d4d4d4" fill-opacity="0.22"/><rect x="1232" y="83" width="1" height="1" fill="#d4d4d4" fill-opacity="0.30"/><rect x="1232" y="84" width="1" height="1" fill="#d4d4d4" fill-opacity="0.42"/><rect x="1233" y="83" width="1" height="1" fill="#d4d4d4" fill-opacity="0.30"/><rect x="1233" y="84" width="1" height="1" fill="#d4d4d4" fill-opacity="0.42"/><rect x="1234" y="83" width="1" height="1" fill="#d4d4d4" fill-opacity="0.30"/><rect x="1234" y="84" width="1" height="1" fill="#d4d4d4" fill-opacity="0.42"/><rect x="1235" y="83" width="1" height="1" fill="#d4d4d4" fill-opacity="0.30"/><rect x="1235" y="84" width="1" height="1" fill="#d4d4d4" fill-opacity="0.42"/><rect x="1236" y="83" width="1" height="1" fill="#d4d4d4" fill-opacity="0.30"/><rect x="1236" y="84" width="1" height="1" fill="#d4d4d4" fill-opacity="0.42"/><rect x="1237" y="84" width="1" height="1" fill="#d4d4d4" fill-opacity="0.22"/><rect x="1199" y="85" width="1" height="1" fill="#dcdcaa" fill-opacity="0.14"/><rect x="1199" y="86" width="1" height="1" fill="#dcdcaa" fill-opacity="0.42"/><rect x="1200" y="85" width="1" height="1" fill="#dcdcaa" fill-opacity="0.30"/><rect x="1200" y="86" width="1" height="1" fill="#dcdcaa" fill-opacity="0.42"/><rect x="1201" y="86" width="1" height="1" fill="#dcdcaa" fill-opacity="0.22"/><rect x="1202" y="85" width="1" height="1" fill="#dcdcaa" fill-opacity="0.30"/><rect x="1202" y="86" width="1" height="1" fill="#dcdcaa" fill-opacity="0.42"/><rect x="1203" y="85" width="1" height="1" fill="#dcdcaa" fill-opacity="0.30"/><rect x="1203" y="86" width="1" height="1" fill="#dcdcaa" fill-opacity="0.42"/><rect x="1204" y="85" width="1" height="1" fill="#dcdcaa" fill-opacity="0.14"/><rect x="1204" y="86" width="1" height="1" fill="#dcdcaa" fill-opacity="0.42"/><rect x="1205" y="85" width="1" height="1" fill="#dcdcaa" fill-opacity="0.14"/><rect x="1205" y="86" width="1" height="1" fill="#dcdcaa" fill-opacity="0.42"/><rect x="1206" y="85" width="1" height="1" fill="#dcdcaa" fill-opacity="0.14"/><rect x="1206" y="86" width="1" height="1" fill="#dcdcaa" fill-opacity="0.42"/><rect x="1207" y="85" width="1" height="1" fill="#dcdcaa" fill-opacity="0.30"/><rect x="1207" y="86" width="1" height="1" fill="#dcdcaa" fill-opacity="0.42"/><rect x="1208" y="86" width="1" height="1" fill="#dcdcaa" fill-opacity="0.22"/><rect x="1209" y="85" width="1" height="1" fill="#dcdcaa" fill-opacity="0.14"/><rect x="1209" y="86" width="1" height="1" fill="#dcdcaa" fill-opacity="0.42"/><rect x="1210" y="85" width="1" height="1" fill="#dcdcaa" fill-opacity="0.30"/><rect x="1210" y="86" width="1" height="1" fill="#dcdcaa" fill-opacity="0.42"/><rect x="1211" y="85" width="1" height="1" fill="#dcdcaa" fill-opacity="0.14"/><rect x="1211" y="86" width="1" height="1" fill="#dcdcaa" fill-opacity="0.42"/><rect x="1212" y="85" width="1" height="1" fill="#dcdcaa" fill-opacity="0.30"/><rect x="1212" y="86" width="1" height="1" fill="#dcdcaa" fill-opacity="0.42"/><rect x="1213" y="85" width="1" height="1" fill="#dcdcaa" fill-opacity="0.14"/><rect x="1213" y="86" width="1" height="1" fill="#dcdcaa" fill-opacity="0.42"/><rect x="1214" y="85" width="1" height="1" fill="#dcdcaa" fill-opacity="0.14"/><rect x="1214" y="86" width="1" height="1" fill="#dcdcaa" fill-opacity="0.42"/><rect x="1215" y="85" width="1" height="1" fill="#d4d4d4" fill-opacity="0.30"/><rect x="1215" y="86" width="1" height="1" fill="#d4d4d4" fill-opacity="0.42"/><rect x="1216" y="85" width="1" height="1" fill="#b5cea8" fill-opacity="0.30"/><rect x="1216" y="86" width="1" height="1" fill="#b5cea8" fill-opacity="0.42"/><rect x="1217" y="85" width="1" height="1" fill="#b5cea8" fill-opacity="0.30"/><rect x="1217" y="86" width="1" height="1" fill="#b5cea8" fill-opacity="0.42"/><rect x="1218" y="85" width="1" height="1" fill="#b5cea8" fill-opacity="0.30"/><rect x="1218" y="86" width="1" height="1" fill="#b5cea8" fill-opacity="0.42"/><rect x="1219" y="85" width="1" height="1" fill="#d4d4d4" fill-opacity="0.30"/><rect x="1219" y="86" width="1" height="1" fill="#d4d4d4" fill-opacity="0.42"/><rect x="1220" y="86" width="1" height="1" fill="#d4d4d4" fill-opacity="0.22"/><rect x="1199" y="89" width="1" height="1" fill="#dcdcaa" fill-opacity="0.14"/><rect x="1199" y="90" width="1" height="1" fill="#dcdcaa" fill-opacity="0.42"/><rect x="1200" y="89" width="1" height="1" fill="#dcdcaa" fill-opacity="0.30"/><rect x="1200" y="90" width="1" height="1" fill="#dcdcaa" fill-opacity="0.42"/><rect x="1201" y="90" width="1" height="1" fill="#dcdcaa" fill-opacity="0.22"/><rect x="1202" y="89" width="1" height="1" fill="#dcdcaa" fill-opacity="0.14"/><rect x="1202" y="90" width="1" height="1" fill="#dcdcaa" fill-opacity="0.42"/><rect x="1203" y="89" width="1" height="1" fill="#dcdcaa" fill-opacity="0.14"/><rect x="1203" y="90" width="1" height="1" fill="#dcdcaa" fill-opacity="0.42"/><rect x="1204" y="89" width="1" height="1" fill="#dcdcaa" fill-opacity="0.14"/><rect x="1204" y="90" width="1" height="1" fill="#dcdcaa" fill-opacity="0.42"/><rect x="1205" y="90" width="1" height="1" fill="#dcdcaa" fill-opacity="0.22"/><rect x="1206" y="89" width="1" height="1" fill="#dcdcaa" fill-opacity="0.14"/><rect x="1206" y="90" width="1" height="1" fill="#dcdcaa" fill-opacity="0.42"/><rect x="1207" y="89" width="1" height="1" fill="#dcdcaa" fill-opacity="0.14"/><rect x="1207" y="90" width="1" height="1" fill="#dcdcaa" fill-opacity="0.42"/><rect x="1208" y="89" width="1" height="1" fill="#dcdcaa" fill-opacity="0.14"/><rect x="1208" y="90" width="1" height="1" fill="#dcdcaa" fill-opacity="0.42"/><rect x="1209" y="89" width="1" height="1" fill="#dcdcaa" fill-opacity="0.30"/><rect x="1209" y="90" width="1" height="1" fill="#dcdcaa" fill-opacity="0.42"/><rect x="1210" y="89" width="1" height="1" fill="#dcdcaa" fill-opacity="0.14"/><rect x="1210" y="90" width="1" height="1" fill="#dcdcaa" fill-opacity="0.42"/><rect x="1211" y="89" width="1" height="1" fill="#d4d4d4" fill-opacity="0.30"/><rect x="1211" y="90" width="1" height="1" fill="#d4d4d4" fill-opacity="0.42"/><rect x="1212" y="89" width="1" height="1" fill="#d4d4d4" fill-opacity="0.30"/><rect x="1212" y="90" width="1" height="1" fill="#d4d4d4" fill-opacity="0.42"/><rect x="1213" y="89" width="1" height="1" fill="#d4d4d4" fill-opacity="0.30"/><rect x="1213" y="90" width="1" height="1" fill="#d4d4d4" fill-opacity="0.42"/><rect x="1214" y="90" width="1" height="1" fill="#d4d4d4" fill-opacity="0.22"/><rect x="1215" y="89" width="1" height="1" fill="#d4d4d4" fill-opacity="0.30"/><rect x="1215" y="90" width="1" height="1" fill="#d4d4d4" fill-opacity="0.42"/><rect x="1216" y="89" width="1" height="1" fill="#d4d4d4" fill-opacity="0.30"/><rect x="1216" y="90" width="1" height="1" fill="#d4d4d4" fill-opacity="0.42"/><rect x="1217" y="89" width="1" height="1" fill="#d4d4d4" fill-opacity="0.30"/><rect x="1217" y="90" width="1" height="1" fill="#d4d4d4" fill-opacity="0.42"/><rect x="1218" y="90" width="1" height="1" fill="#d4d4d4" fill-opacity="0.22"/><rect x="1219" y="89" width="1" height="1" fill="#d4d4d4" fill-opacity="0.30"/><rect x="1219" y="90" width="1" height="1" fill="#d4d4d4" fill-opacity="0.42"/><rect x="1220" y="89" width="1" height="1" fill="#d4d4d4" fill-opacity="0.30"/><rect x="1220" y="90" width="1" height="1" fill="#d4d4d4" fill-opacity="0.42"/><rect x="1221" y="89" width="1" height="1" fill="#d4d4d4" fill-opacity="0.30"/><rect x="1221" y="90" width="1" height="1" fill="#d4d4d4" fill-opacity="0.42"/><rect x="1222" y="90" width="1" height="1" fill="#d4d4d4" fill-opacity="0.22"/><rect x="1223" y="89" width="1" height="1" fill="#d4d4d4" fill-opacity="0.30"/><rect x="1223" y="90" width="1" height="1" fill="#d4d4d4" fill-opacity="0.42"/><rect x="1224" y="89" width="1" height="1" fill="#d4d4d4" fill-opacity="0.30"/><rect x="1224" y="90" width="1" height="1" fill="#d4d4d4" fill-opacity="0.42"/><rect x="1225" y="89" width="1" height="1" fill="#d4d4d4" fill-opacity="0.30"/><rect x="1225" y="90" width="1" height="1" fill="#d4d4d4" fill-opacity="0.42"/><rect x="1226" y="90" width="1" height="1" fill="#d4d4d4" fill-opacity="0.22"/><rect x="1228" y="89" width="1" height="1" fill="#d4d4d4" fill-opacity="0.30"/><rect x="1228" y="90" width="1" height="1" fill="#d4d4d4" fill-opacity="0.42"/><rect x="1229" y="89" width="1" height="1" fill="#d4d4d4" fill-opacity="0.30"/><rect x="1229" y="90" width="1" height="1" fill="#d4d4d4" fill-opacity="0.42"/><rect x="1230" y="89" width="1" height="1" fill="#d4d4d4" fill-opacity="0.30"/><rect x="1230" y="90" width="1" height="1" fill="#d4d4d4" fill-opacity="0.42"/><rect x="1231" y="90" width="1" height="1" fill="#d4d4d4" fill-opacity="0.22"/><rect x="1232" y="89" width="1" height="1" fill="#d4d4d4" fill-opacity="0.30"/><rect x="1232" y="90" width="1" height="1" fill="#d4d4d4" fill-opacity="0.42"/><rect x="1233" y="89" width="1" height="1" fill="#d4d4d4" fill-opacity="0.30"/><rect x="1233" y="90" width="1" height="1" fill="#d4d4d4" fill-opacity="0.42"/><rect x="1234" y="89" width="1" height="1" fill="#d4d4d4" fill-opacity="0.30"/><rect x="1234" y="90" width="1" height="1" fill="#d4d4d4" fill-opacity="0.42"/><rect x="1235" y="89" width="1" height="1" fill="#d4d4d4" fill-opacity="0.30"/><rect x="1235" y="90" width="1" height="1" fill="#d4d4d4" fill-opacity="0.42"/><rect x="1236" y="90" width="1" height="1" fill="#d4d4d4" fill-opacity="0.22"/><rect x="1199" y="91" width="1" height="1" fill="#dcdcaa" fill-opacity="0.14"/><rect x="1199" y="92" width="1" height="1" fill="#dcdcaa" fill-opacity="0.42"/><rect x="1200" y="91" width="1" height="1" fill="#dcdcaa" fill-opacity="0.30"/><rect x="1200" y="92" width="1" height="1" fill="#dcdcaa" fill-opacity="0.42"/><rect x="1201" y="92" width="1" height="1" fill="#dcdcaa" fill-opacity="0.22"/><rect x="1202" y="91" width="1" height="1" fill="#dcdcaa" fill-opacity="0.30"/><rect x="1202" y="92" width="1" height="1" fill="#dcdcaa" fill-opacity="0.42"/><rect x="1203" y="91" width="1" height="1" fill="#dcdcaa" fill-opacity="0.30"/><rect x="1203" y="92" width="1" height="1" fill="#dcdcaa" fill-opacity="0.42"/><rect x="1204" y="91" width="1" height="1" fill="#dcdcaa" fill-opacity="0.14"/><rect x="1204" y="92" width="1" height="1" fill="#dcdcaa" fill-opacity="0.42"/><rect x="1205" y="91" width="1" height="1" fill="#dcdcaa" fill-opacity="0.14"/><rect x="1205" y="92" width="1" height="1" fill="#dcdcaa" fill-opacity="0.42"/><rect x="1206" y="91" width="1" height="1" fill="#dcdcaa" fill-opacity="0.14"/><rect x="1206" y="92" width="1" height="1" fill="#dcdcaa" fill-opacity="0.42"/><rect x="1207" y="91" width="1" height="1" fill="#dcdcaa" fill-opacity="0.30"/><rect x="1207" y="92" width="1" height="1" fill="#dcdcaa" fill-opacity="0.42"/><rect x="1208" y="92" width="1" height="1" fill="#dcdcaa" fill-opacity="0.22"/><rect x="1209" y="91" width="1" height="1" fill="#dcdcaa" fill-opacity="0.14"/><rect x="1209" y="92" width="1" height="1" fill="#dcdcaa" fill-opacity="0.42"/><rect x="1210" y="91" width="1" height="1" fill="#dcdcaa" fill-opacity="0.30"/><rect x="1210" y="92" width="1" height="1" fill="#dcdcaa" fill-opacity="0.42"/><rect x="1211" y="91" width="1" height="1" fill="#dcdcaa" fill-opacity="0.14"/><rect x="1211" y="92" width="1" height="1" fill="#dcdcaa" fill-opacity="0.42"/><rect x="1212" y="91" width="1" height="1" fill="#dcdcaa" fill-opacity="0.30"/><rect x="1212" y="92" width="1" height="1" fill="#dcdcaa" fill-opacity="0.42"/><rect x="1213" y="91" width="1" height="1" fill="#dcdcaa" fill-opacity="0.14"/><rect x="1213" y="92" width="1" height="1" fill="#dcdcaa" fill-opacity="0.42"/><rect x="1214" y="91" width="1" height="1" fill="#dcdcaa" fill-opacity="0.14"/><rect x="1214" y="92" width="1" height="1" fill="#dcdcaa" fill-opacity="0.42"/><rect x="1215" y="91" width="1" height="1" fill="#d4d4d4" fill-opacity="0.30"/><rect x="1215" y="92" width="1" height="1" fill="#d4d4d4" fill-opacity="0.42"/><rect x="1216" y="91" width="1" height="1" fill="#b5cea8" fill-opacity="0.30"/><rect x="1216" y="92" width="1" height="1" fill="#b5cea8" fill-opacity="0.42"/><rect x="1217" y="91" width="1" height="1" fill="#b5cea8" fill-opacity="0.30"/><rect x="1217" y="92" width="1" height="1" fill="#b5cea8" fill-opacity="0.42"/><rect x="1218" y="91" width="1" height="1" fill="#b5cea8" fill-opacity="0.30"/><rect x="1218" y="92" width="1" height="1" fill="#b5cea8" fill-opacity="0.42"/><rect x="1219" y="91" width="1" height="1" fill="#d4d4d4" fill-opacity="0.30"/><rect x="1219" y="92" width="1" height="1" fill="#d4d4d4" fill-opacity="0.42"/><rect x="1220" y="92" width="1" height="1" fill="#d4d4d4" fill-opacity="0.22"/><rect x="1195" y="93" width="1" height="1" fill="#d4d4d4" fill-opacity="0.30"/><rect x="1195" y="94" width="1" height="1" fill="#d4d4d4" fill-opacity="0.42"/><rect x="1195" y="95" width="1" height="1" fill="#c586c0" fill-opacity="0.14"/><rect x="1195" y="96" width="1" height="1" fill="#c586c0" fill-opacity="0.42"/><rect x="1196" y="95" width="1" height="1" fill="#c586c0" fill-opacity="0.14"/><rect x="1196" y="96" width="1" height="1" fill="#c586c0" fill-opacity="0.42"/><rect x="1197" y="95" width="1" height="1" fill="#c586c0" fill-opacity="0.30"/><rect x="1197" y="96" width="1" height="1" fill="#c586c0" fill-opacity="0.42"/><rect x="1198" y="95" width="1" height="1" fill="#c586c0" fill-opacity="0.14"/><rect x="1198" y="96" width="1" height="1" fill="#c586c0" fill-opacity="0.42"/><rect x="1199" y="95" width="1" height="1" fill="#c586c0" fill-opacity="0.14"/><rect x="1199" y="96" width="1" height="1" fill="#c586c0" fill-opacity="0.42"/><rect x="1200" y="95" width="1" height="1" fill="#c586c0" fill-opacity="0.14"/><rect x="1200" y="96" width="1" height="1" fill="#c586c0" fill-opacity="0.42"/><rect x="1202" y="95" width="1" height="1" fill="#d4d4d4" fill-opacity="0.30"/><rect x="1202" y="96" width="1" height="1" fill="#d4d4d4" fill-opacity="0.42"/><rect x="1203" y="95" width="1" height="1" fill="#d4d4d4" fill-opacity="0.30"/><rect x="1203" y="96" width="1" height="1" fill="#d4d4d4" fill-opacity="0.42"/><rect x="1204" y="96" width="1" height="1" fill="#d4d4d4" fill-opacity="0.22"/><rect x="1205" y="95" width="1" height="1" fill="#d4d4d4" fill-opacity="0.30"/><rect x="1205" y="96" width="1" height="1" fill="#d4d4d4" fill-opacity="0.42"/><rect x="1206" y="95" width="1" height="1" fill="#d4d4d4" fill-opacity="0.30"/><rect x="1206" y="96" width="1" height="1" fill="#d4d4d4" fill-opacity="0.42"/><rect x="1207" y="95" width="1" height="1" fill="#d4d4d4" fill-opacity="0.30"/><rect x="1207" y="96" width="1" height="1" fill="#d4d4d4" fill-opacity="0.42"/><rect x="1208" y="96" width="1" height="1" fill="#d4d4d4" fill-opacity="0.22"/><rect x="1191" y="97" width="1" height="1" fill="#d4d4d4" fill-opacity="0.30"/><rect x="1191" y="98" width="1" height="1" fill="#d4d4d4" fill-opacity="0.42"/></svg>
</body></html>
